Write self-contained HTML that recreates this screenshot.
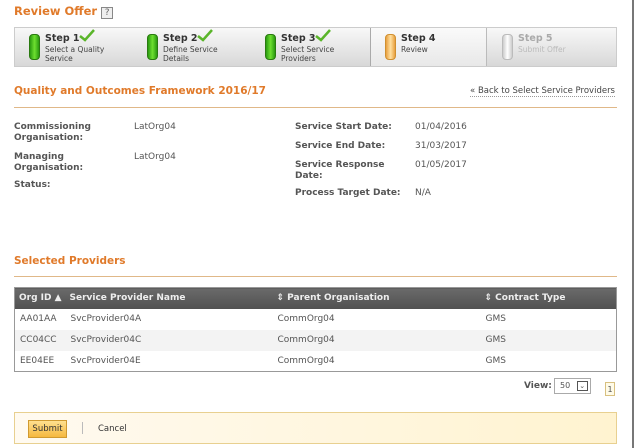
<!DOCTYPE html>
<html><head><style>
*{margin:0;padding:0;box-sizing:border-box}
body{width:634px;height:448px;background:#fff;font-family:"DejaVu Sans",Verdana,sans-serif;font-size:9px;color:#555;position:relative;overflow:hidden;border-right:2px solid #777}
.abs{position:absolute}
.or{color:#e07a2a;font-weight:bold}
.steps{left:14px;top:27px;width:603px;height:40px;border:1px solid #ccc;background:linear-gradient(#f8f8f8,#d8d8d8)}
.st{position:absolute;top:0;height:38px;width:117px}
.pill{position:absolute;left:14px;top:6px;width:11px;height:26px;border-radius:4px;background:linear-gradient(90deg,#2a9a10,#6ee030,#2a9a10);border:1px solid #2a7a10}
.st b{position:absolute;left:30px;top:5px;font-size:9.5px;color:#333}
.st .sub{position:absolute;left:30px;top:17px;font-size:7.5px;line-height:9px;color:#444}
.ck{position:absolute;left:64px;top:1px}
.lab{font-weight:bold;color:#555;line-height:11px}
th{background:linear-gradient(#6a6a6a,#505050);color:#eee;text-align:left;font-weight:bold;height:21px;padding-left:4px}
td{height:21px;padding-left:5px;color:#555}
tr.a td{background:#f3f3f3}
</style></head><body>
<div class="abs or" style="left:14px;top:4px;font-size:11.5px">Review Offer <span style="display:inline-block;width:12px;height:12px;border:1px solid #888;font-size:9px;color:#666;text-align:center;line-height:10px;font-weight:normal;background:#eee">?</span></div>
<div class="abs steps">
<div class="st" style="left:0"><div class="pill"></div><b>Step 1</b><svg class="ck" width="16" height="13" viewBox="0 0 16 13"><path d="M1 7 L6 11 L15 1" stroke="#5ab52a" stroke-width="2.5" fill="none"/></svg><div class="sub">Select a Quality<br>Service</div></div>
<div class="st" style="left:118px"><div class="pill"></div><b>Step 2</b><svg class="ck" width="16" height="13" viewBox="0 0 16 13"><path d="M1 7 L6 11 L15 1" stroke="#5ab52a" stroke-width="2.5" fill="none"/></svg><div class="sub">Define Service<br>Details</div></div>
<div class="st" style="left:236px"><div class="pill"></div><b>Step 3</b><svg class="ck" width="16" height="13" viewBox="0 0 16 13"><path d="M1 7 L6 11 L15 1" stroke="#5ab52a" stroke-width="2.5" fill="none"/></svg><div class="sub">Select Service<br>Providers</div></div>
<div class="st" style="left:355px;background:linear-gradient(#fafafa,#e8e8e8);border-left:1px solid #aaa;border-right:1px solid #bbb"><div class="pill" style="background:linear-gradient(90deg,#e8a040,#ffe0a0,#e8a040);border-color:#d09030"></div><b>Step 4</b><div class="sub">Review</div></div>
<div class="st" style="left:473px"><div class="pill" style="background:linear-gradient(90deg,#ccc,#fff,#ccc);border-color:#bbb"></div><b style="color:#aaa">Step 5</b><div class="sub" style="color:#bbb">Submit Offer</div></div>
</div>
<div class="abs or" style="left:14px;top:85px;font-size:10.5px">Quality and Outcomes Framework 2016/17</div>
<div class="abs" style="right:17px;top:86px;color:#444;font-size:8.5px;border-bottom:1px dotted #999">« Back to Select Service Providers</div>
<div class="abs" style="left:14px;top:107px;width:603px;border-top:1px solid #e0b888"></div>
<div class="abs lab" style="left:14px;top:122px">Commissioning<br>Organisation:</div>
<div class="abs" style="left:134px;top:122px">LatOrg04</div>
<div class="abs lab" style="left:14px;top:152px">Managing<br>Organisation:</div>
<div class="abs" style="left:134px;top:152px">LatOrg04</div>
<div class="abs lab" style="left:14px;top:180px">Status:</div>
<div class="abs lab" style="left:295px;top:122px">Service Start Date:</div>
<div class="abs" style="left:415px;top:122px">01/04/2016</div>
<div class="abs lab" style="left:295px;top:141px">Service End Date:</div>
<div class="abs" style="left:415px;top:141px">31/03/2017</div>
<div class="abs lab" style="left:295px;top:160px">Service Response<br>Date:</div>
<div class="abs" style="left:415px;top:160px">01/05/2017</div>
<div class="abs lab" style="left:295px;top:188px">Process Target Date:</div>
<div class="abs" style="left:415px;top:188px">N/A</div>
<div class="abs or" style="left:14px;top:255px;font-size:10.5px">Selected Providers</div>
<div class="abs" style="left:14px;top:276px;width:603px;border-top:1px solid #e0b888"></div>
<table class="abs" style="left:14px;top:287px;width:603px;border-collapse:collapse;border:1px solid #999">
<tr><th style="width:51px">Org ID ▲</th><th style="width:207px">Service Provider Name</th><th style="width:208px">⇕ Parent Organisation</th><th>⇕ Contract Type</th></tr>
<tr><td>AA01AA</td><td>SvcProvider04A</td><td>CommOrg04</td><td>GMS</td></tr>
<tr class="a"><td>CC04CC</td><td>SvcProvider04C</td><td>CommOrg04</td><td>GMS</td></tr>
<tr><td>EE04EE</td><td>SvcProvider04E</td><td>CommOrg04</td><td>GMS</td></tr>
</table>
<div class="abs lab" style="left:524px;top:381px">View:</div>
<div class="abs" style="left:554px;top:378px;width:37px;height:16px;border:1px solid #aaa;font-size:8px;padding:2px 0 0 5px">50 <span style="display:inline-block;width:11px;height:10px;border:1px solid #555;font-size:7px;text-align:center;line-height:9px;margin-left:4px">⌄</span></div>
<div class="abs" style="left:605px;top:382px;width:10px;height:14px;border:1px solid #d8c080;background:#fffbe8;font-size:8px;text-align:center;line-height:13px">1</div>
<div class="abs" style="left:14px;top:412px;width:603px;height:32px;border:1px solid #e8d090;background:linear-gradient(90deg,#fffaf0,#fff3d0)"></div>
<div class="abs" style="left:28px;top:420px;width:39px;height:18px;border:1px solid #d09a30;background:linear-gradient(#ffe090,#f5b840);color:#333;font-size:8.5px;text-align:center;line-height:16px">Submit</div>
<div class="abs" style="left:82px;top:422px;height:12px;border-left:1px solid #bbb"></div>
<div class="abs" style="left:98px;top:424px;color:#333;font-size:8.5px">Cancel</div>
</body></html>
